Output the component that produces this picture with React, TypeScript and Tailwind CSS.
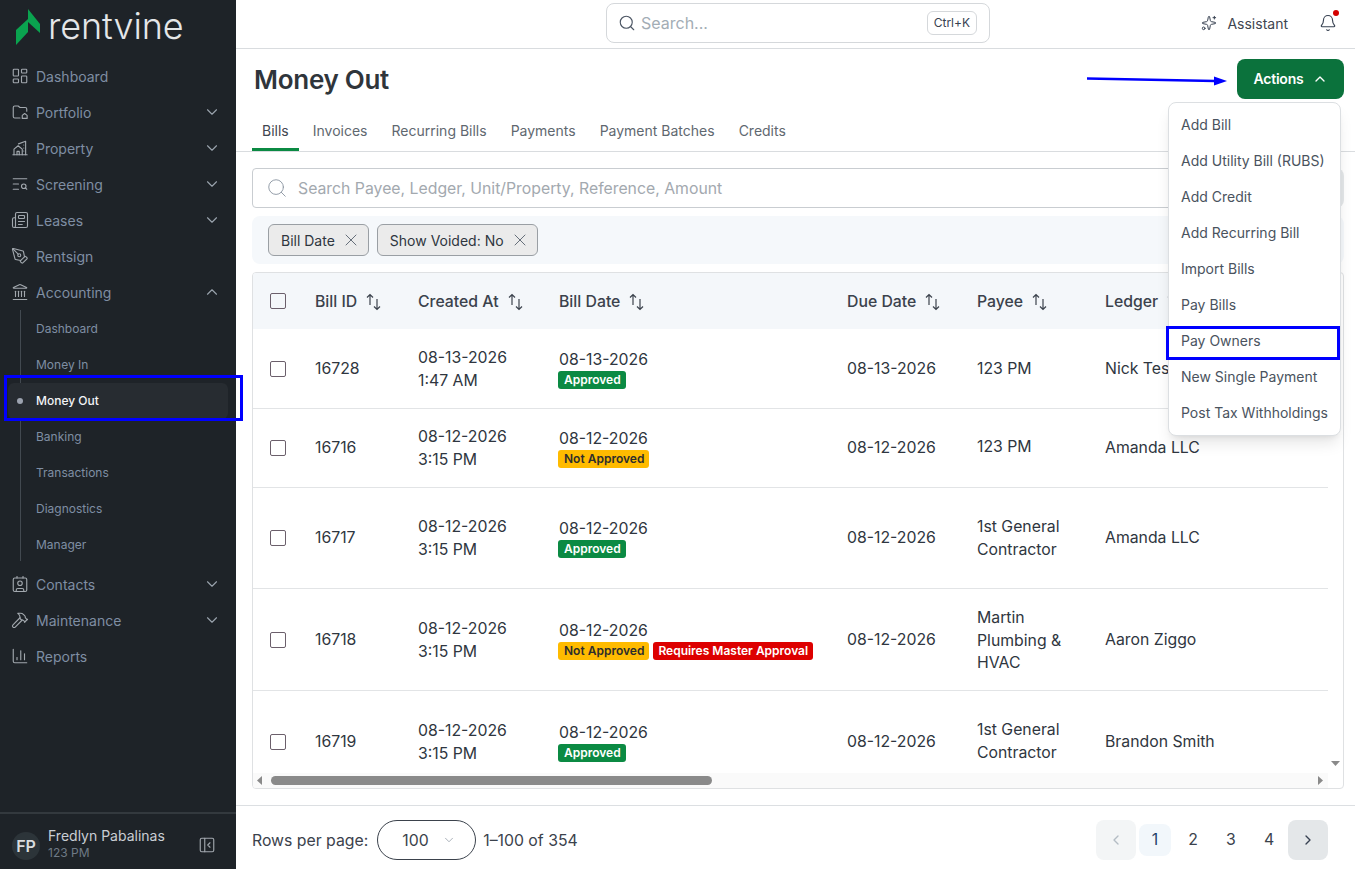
import React from "react";
import {
  LayoutDashboard, TextSearch, Newspaper, PenTool, Landmark, Contact, Hammer, ChartColumn,
  Sparkles, Bell, Search, X, ChevronDown, ChevronUp, ChevronLeft, ChevronRight, PanelLeftClose,
} from "lucide-react";

const font = { fontFamily: "Inter, 'Liberation Sans', sans-serif" };

function PortfolioIcon(props: { className?: string }) {
  return (
    <svg viewBox="0 0 24 24" fill="none" stroke="currentColor" strokeWidth={1.5} strokeLinecap="round" strokeLinejoin="round" {...props}>
      <path d="M21 11V8a2 2 0 0 0-2-2h-7L9.5 4H5a2 2 0 0 0-2 2v12a2 2 0 0 0 2 2h7" />
      <path d="M15 20.5v-4l3.2-2.5 3.3 2.5v4z" />
    </svg>
  );
}
function PropertyIcon(props: { className?: string }) {
  return (
    <svg viewBox="0 0 24 24" fill="none" stroke="currentColor" strokeWidth={1.5} strokeLinecap="round" strokeLinejoin="round" {...props}>
      <path d="M2.5 21h19" />
      <path d="M4 21v-7.5L9.5 9l5.5 4.5V21" />
      <path d="M8 21v-4.5h3V21" />
      <path d="M10 6.5 19.5 3v18" />
      <path d="M17 8v.01M17 12v.01M17 16v.01" />
    </svg>
  );
}
function SortIcon() {
  return (
    <svg width="15" height="18" viewBox="0 0 15 18" fill="none" stroke="#3b424c" strokeWidth="1.2" className="shrink-0">
      <path d="M4 12V1.5M1 4.5l3-3 3 3" />
      <path d="M11 6v10.5M8 13.5l3 3 3-3" />
    </svg>
  );
}

type NavItem = { label: string; icon: React.ElementType; chevron?: "down" | "up" };
const navTop: NavItem[] = [
  { label: "Dashboard", icon: LayoutDashboard },
  { label: "Portfolio", icon: PortfolioIcon, chevron: "down" },
  { label: "Property", icon: PropertyIcon, chevron: "down" },
  { label: "Screening", icon: TextSearch, chevron: "down" },
  { label: "Leases", icon: Newspaper, chevron: "down" },
  { label: "Rentsign", icon: PenTool },
  { label: "Accounting", icon: Landmark, chevron: "up" },
];
const navSub = ["Dashboard", "Money In", "Money Out", "Banking", "Transactions", "Diagnostics", "Manager"];
const navBottom: NavItem[] = [
  { label: "Contacts", icon: Contact, chevron: "down" },
  { label: "Maintenance", icon: Hammer, chevron: "down" },
  { label: "Reports", icon: ChartColumn },
];

function NavRow({ item }: { item: NavItem }) {
  const Icon = item.icon;
  return (
    <div className="flex h-9 items-center pl-[11px] pr-[15px] text-[14px] text-[#7f8ea3]">
      <Icon className="h-[18px] w-[18px] shrink-0 text-[#a2a8ae]" strokeWidth={1.5} />
      <span className="ml-[7px] flex-1">{item.label}</span>
      {item.chevron === "down" && <ChevronDown className="h-[18px] w-[18px] text-[#9aa3ad]" strokeWidth={1.5} />}
      {item.chevron === "up" && <ChevronUp className="h-[18px] w-[18px] text-[#9aa3ad]" strokeWidth={1.5} />}
    </div>
  );
}

function Sidebar() {
  return (
    <aside className="flex h-full w-[236px] shrink-0 flex-col bg-[#1e2328]">
      <div className="flex h-[58px] items-center pb-[6px] pl-[16px]">
        <svg width="24" height="36" viewBox="0 0 24 36" className="mt-[2px] shrink-0">
          <path d="M12 0 L24 15 L24 24 L12 13 Z" fill="#0aa34f" />
          <path d="M12 10 L12 23 L0 36 L0 21 Z" fill="#0aa34f" />
        </svg>
        <span className="ml-[8px] text-[36px] font-[350] leading-none tracking-[-0.1px] text-[#e4e6e8]">rentvine</span>
      </div>
      <nav className="flex flex-col">
        {navTop.map((n) => <NavRow key={n.label} item={n} />)}
        <div className="relative flex flex-col pt-[1px]">
          <div className="absolute bottom-[2px] left-[20px] top-0 w-px bg-[#424950]" />
          {navSub.map((s) => {
            const active = s === "Money Out";
            return (
              <div
                key={s}
                className={`relative mx-[8px] flex h-9 items-center rounded-md pl-[28px] text-[12px] ${active ? "bg-[#272c31] font-medium text-[#f3f4f6]" : "text-[#7f8ea3]"}`}
              >
                {active && <span className="absolute left-[9px] h-[6px] w-[6px] rounded-full bg-[#9ca3af]" />}
                {s}
              </div>
            );
          })}
        </div>
        <div className="mt-[3px] flex flex-col">
          {navBottom.map((n) => <NavRow key={n.label} item={n} />)}
        </div>
      </nav>
      <div className="mt-auto flex h-[57px] items-center border-t-2 border-[#33393e] pl-[12px] pr-[20px] pt-[4px]">
        <div className="mt-[4px] flex h-[28px] w-[28px] items-center justify-center rounded-full bg-[#2c3439] text-[16px] font-semibold text-[#d9dcdf]">FP</div>
        <div className="ml-[8px] flex-1">
          <div className="text-[14px] leading-[18px] text-[#c9ced4]">Fredlyn Pabalinas</div>
          <div className="text-[12px] leading-[16px] text-[#6f7a86]">123 PM</div>
        </div>
        <PanelLeftClose className="mt-[2px] h-[18px] w-[18px] text-[#a2a8ae]" strokeWidth={1.5} />
      </div>
    </aside>
  );
}

function TopBar() {
  return (
    <header className="relative flex h-[49px] shrink-0 items-center justify-end border-b border-[#d9dcdf] pb-[2px] pr-[18px]">
      <div className="absolute left-[370px] top-[3px] flex h-[40px] w-[384px] items-center rounded-lg border border-[#d5d8db] pl-[11px] pr-[12px]">
        <Search className="h-[18px] w-[18px] text-[#4b5563]" strokeWidth={1.5} />
        <span className="ml-[5px] flex-1 text-[16px] text-[#a3adb5]">Search...</span>
        <span className="flex h-[24px] items-center rounded-md border border-[#d5d8db] px-[6px] text-[12px] text-[#374151]">Ctrl+K</span>
      </div>
      <Sparkles className="h-[16px] w-[16px] text-[#374151]" strokeWidth={1.5} />
      <span className="ml-[10px] text-[14px] text-[#3f4650]">Assistant</span>
      <div className="relative ml-[31px]">
        <Bell className="h-[18px] w-[18px] text-[#374151]" strokeWidth={1.5} />
        <span className="absolute right-[-2px] top-[-4px] h-[6px] w-[6px] rounded-full bg-[#d40000]" />
      </div>
    </header>
  );
}

const tabs = ["Bills", "Invoices", "Recurring Bills", "Payments", "Payment Batches", "Credits"];

function Badge({ kind }: { kind: "ok" | "no" | "master" }) {
  if (kind === "ok") return <span className="rounded-[3px] bg-[#0b8a43] pl-[6px] pr-[5px] text-[12px] font-semibold leading-[18px] text-white">Approved</span>;
  if (kind === "no") return <span className="rounded-[3px] bg-[#ffbb00] pl-[6px] pr-[5px] text-[12px] font-semibold leading-[18px] text-[#2d2d2d]">Not Approved</span>;
  return <span className="rounded-[3px] bg-[#dd0000] px-[5px] text-[12px] font-semibold leading-[18px] text-white">Requires Master Approval</span>;
}

type Row = { id: string; d: string; t: string; badges: ("ok" | "no" | "master")[]; payee: string[]; ledger: string; h: string; cell: string; pay: string };
const rows: Row[] = [
  { id: "16728", d: "08-13-2026", t: "1:47 AM", badges: ["ok"], payee: ["123 PM"], ledger: "Nick Tester", h: "h-[79px]", cell: "[&>td]:pt-[2px]", pay: "" },
  { id: "16716", d: "08-12-2026", t: "3:15 PM", badges: ["no"], payee: ["123 PM"], ledger: "Amanda LLC", h: "h-[79px]", cell: "", pay: "" },
  { id: "16717", d: "08-12-2026", t: "3:15 PM", badges: ["ok"], payee: ["1st General", "Contractor"], ledger: "Amanda LLC", h: "h-[101px]", cell: "", pay: "pt-[2px]" },
  { id: "16718", d: "08-12-2026", t: "3:15 PM", badges: ["no", "master"], payee: ["Martin", "Plumbing &", "HVAC"], ledger: "Aaron Ziggo", h: "h-[102px]", cell: "[&>td]:pt-[2px]", pay: "pt-[2px]" },
  { id: "16719", d: "08-12-2026", t: "3:15 PM", badges: ["ok"], payee: ["1st General", "Contractor"], ledger: "Brandon Smith", h: "h-[101px]", cell: "[&>td]:pt-[2px]", pay: "" },
];
const cols = ["Bill ID", "Created At", "Bill Date", "Due Date", "Payee", "Ledger"];
const widths = ["w-[103px]", "w-[141px]", "w-[288px]", "w-[130px]", "w-[128px]", "w-[224px]"];

function Checkbox() {
  return <div className="h-[16px] w-[16px] rounded-[2px] border border-[#6b5f6b]" />;
}

function BillsTable() {
  return (
    <div className="mb-[16px] ml-[16px] mr-[11px] flex min-h-0 flex-1 flex-col overflow-hidden rounded-[4px] border border-[#dfe1e3]">
      <div className="flex min-h-0 flex-1">
        <div className="min-w-0 flex-1 overflow-hidden">
          <table className="w-[1076px] table-fixed border-collapse text-left text-[15.8px] text-[#2f3640]">
            <thead>
              <tr className="h-[56px] bg-[#f4f7fa]">
                <th className="w-[62px] pl-[17px] font-normal"><Checkbox /></th>
                {cols.map((c, i) => (
                  <th key={c} className={`${widths[i]} pt-[2px] font-medium text-[#3b424c]`}>
                    <span className="flex items-center gap-[9px]">{c}<SortIcon /></span>
                  </th>
                ))}
              </tr>
            </thead>
            <tbody>
              {rows.map((r) => (
                <tr key={r.id} className={`${r.h} ${r.cell} border-b border-[#e2e4e6]`}>
                  <td className="pl-[17px]"><Checkbox /></td>
                  <td>{r.id}</td>
                  <td className="leading-[23px]"><div>{r.d}</div><div>{r.t}</div></td>
                  <td>
                    <div className="pt-[1px] leading-[20px]">{r.d}</div>
                    <div className="-ml-px mt-[1px] flex gap-[4px]">{r.badges.map((b) => <Badge key={b} kind={b} />)}</div>
                  </td>
                  <td>{r.d}</td>
                  <td className="leading-[22.5px]"><div className={r.pay}>{r.payee.map((p) => <div key={p}>{p}</div>)}</div></td>
                  <td>{r.ledger}</td>
                </tr>
              ))}
            </tbody>
          </table>
        </div>
        <div className="flex w-[15px] shrink-0 flex-col items-center justify-end pb-[7px]">
          <svg width="9" height="5" viewBox="0 0 9 5"><path d="M0 0h9L4.5 5z" fill="#8a8a8a" /></svg>
        </div>
      </div>
      <div className="flex h-[15px] shrink-0 items-center pr-[15px]">
        <div className="flex h-full flex-1 items-center bg-[#fafafa] pl-[4px] pr-[5px]">
          <svg width="5" height="9" viewBox="0 0 5 9"><path d="M5 0v9L0 4.5z" fill="#8a8a8a" /></svg>
          <div className="ml-[9px] h-[9px] w-[441px] rounded-full bg-[#8a8a8a]" />
          <svg className="ml-auto" width="5" height="9" viewBox="0 0 5 9"><path d="M0 0v9l5-4.5z" fill="#8a8a8a" /></svg>
        </div>
      </div>
    </div>
  );
}

const actions = ["Add Bill", "Add Utility Bill (RUBS)", "Add Credit", "Add Recurring Bill", "Import Bills", "Pay Bills", "Pay Owners", "New Single Payment", "Post Tax Withholdings"];

function Footer() {
  return (
    <footer className="flex h-[64px] shrink-0 items-center border-t border-[#dcdfe2] pl-[16px] pr-[27px] pt-[5px] text-[15.8px] text-[#3b424c]">
      <span className="pt-[2px]">Rows per page:</span>
      <div className="ml-[9px] flex h-[40px] w-[99px] items-center rounded-full border border-[#3b424c] pl-[24px]">
        <span className="pt-[2px]">100</span>
        <ChevronDown className="ml-[13px] h-[14px] w-[14px] text-[#8b95a1]" strokeWidth={1.25} />
      </div>
      <span className="ml-[7px] pt-[2px]">1–100 of 354</span>
      <div className="ml-auto flex items-center">
        <div className="flex h-[40px] w-[40px] items-center justify-center rounded-lg bg-[#f3f5f6]"><ChevronLeft className="h-[16px] w-[16px] text-[#b3bcc4]" /></div>
        <div className="ml-[3px] flex h-[32px] w-[32px] items-center justify-center rounded-lg bg-[#f2f7fb] text-[#1f3f66]">1</div>
        <div className="ml-[3px] flex h-[32px] w-[38px] items-center justify-center">2</div>
        <div className="flex h-[32px] w-[38px] items-center justify-center">3</div>
        <div className="flex h-[32px] w-[38px] items-center justify-center">4</div>
        <div className="flex h-[40px] w-[40px] items-center justify-center rounded-lg bg-[#e4e7e9]"><ChevronRight className="h-[16px] w-[16px] text-[#374151]" /></div>
      </div>
    </footer>
  );
}

export default function App() {
  return (
    <div className="relative flex h-[869px] w-[1355px] overflow-hidden bg-white" style={font}>
      <Sidebar />
      <main className="flex min-w-0 flex-1 flex-col">
        <TopBar />
        <div className="flex h-[61px] shrink-0 items-center justify-between pl-[18px] pr-[11px]">
          <h1 className="text-[26px] font-semibold tracking-[-0.28px] text-[#2f353b]">Money Out</h1>
          <button className="-mt-[2px] flex h-[40px] w-[107px] items-center justify-center gap-[8px] rounded-lg bg-[#0b723c] text-[14px] font-semibold tracking-[-0.2px] text-white">
            Actions <ChevronUp className="h-[16px] w-[16px]" />
          </button>
        </div>
        <div className="flex h-[42px] shrink-0 items-start border-b border-[#d9dcdf] pl-[16px]">
          {tabs.map((t, i) => (
            <div key={t} className={`mr-[4px] flex h-[41px] items-center px-[10px] text-[14px] ${i === 0 ? "border-b-[3px] border-[#0b8a43] pt-[3px] text-[#3f4650]" : "text-[#5f6870]"}`}>{t}</div>
          ))}
        </div>
        <div className="ml-[16px] mr-[11px] mt-[16px] flex h-[40px] shrink-0 items-center gap-[10px]">
          <div className="flex h-full flex-1 items-center rounded-[4px] border border-[#c9cdd1] pl-[13px]">
            <Search className="h-[22px] w-[22px] text-[#8b95a1]" strokeWidth={1} />
            <span className="ml-[10px] pt-[2px] text-[15.8px] text-[#a3a9af]">Search Payee, Ledger, Unit/Property, Reference, Amount</span>
          </div>
          <div className="h-full w-[48px] rounded-lg bg-[#e4e7e9]" />
        </div>
        <div className="ml-[16px] mr-[11px] mt-[8px] flex h-[48px] shrink-0 items-center gap-[8px] rounded-lg bg-[#f5f8fb] px-[16px]">
          {["Bill Date", "Show Voided: No"].map((t) => (
            <div key={t} className="flex h-[32px] items-center gap-[6px] rounded-md border border-[#9a9fa4] bg-[#ebebeb] pl-[12px] pr-[7px] text-[14px] text-[#2f3640]">
              {t}<X className="h-[20px] w-[20px] text-[#4b5563]" strokeWidth={1} />
            </div>
          ))}
        </div>
        <div className="mt-[8px] flex min-h-0 flex-1 flex-col"><BillsTable /></div>
        <Footer />
      </main>

      {/* dropdown */}
      <div className="absolute left-[1168px] top-[102px] w-[173px] rounded-lg border border-[#dcdfe2] bg-white pb-[5px] pt-[3px] shadow-lg">
        {actions.map((a) => (
          <div key={a} className="flex h-9 items-center pl-[12px] text-[14px] text-[#4a535e]">{a}</div>
        ))}
      </div>

      {/* annotations */}
      <div className="absolute left-[4px] top-[375px] h-[46px] w-[239px] border-[3px] border-[#0000ff]" />
      <div className="absolute left-[1166px] top-[326px] h-[34px] w-[174px] border-[3px] border-[#0000ff]" />
      <svg className="absolute left-[1080px] top-[70px]" width="155" height="20" viewBox="0 0 155 20">
        <path d="M7 8.5 L135 11" stroke="#0000ff" strokeWidth="2.5" />
        <path d="M134 6.5 L147 11 L134 15.5 Z" fill="#0000ff" />
      </svg>
    </div>
  );
}
